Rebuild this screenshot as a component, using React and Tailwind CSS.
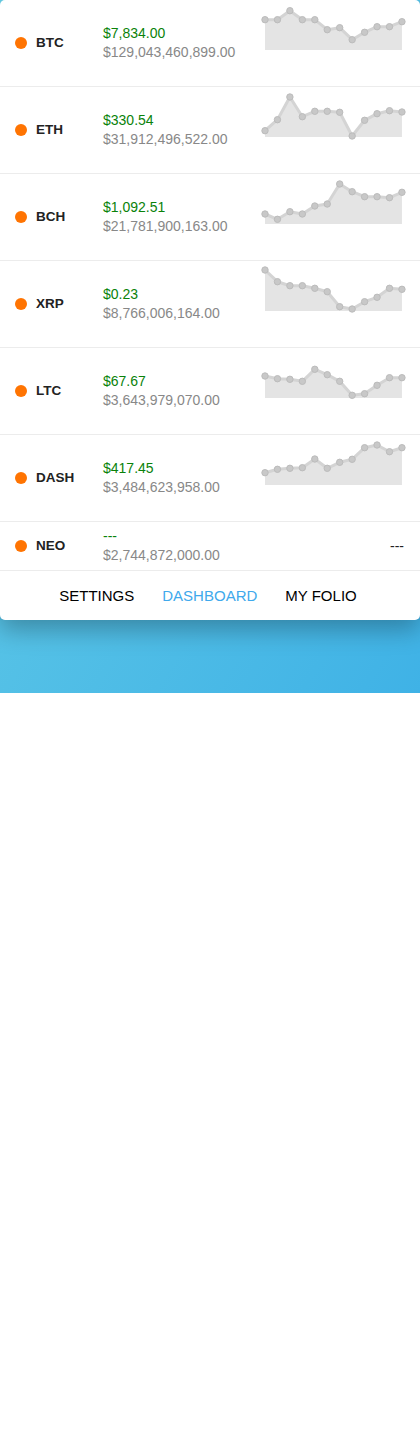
import React from "react";

const coins = [
  { sym: "BTC", price: "$7,834.00", cap: "$129,043,460,899.00", ys: [19.7, 19.7, 10.7, 19.7, 19.7, 29.7, 27.7, 39.7, 32.3, 26.7, 26.7, 21.7] },
  { sym: "ETH", price: "$330.54", cap: "$31,912,496,522.00", ys: [43.7, 32.7, 10, 29.7, 24.3, 24.3, 25.3, 49, 33.3, 26.7, 23.7, 25] },
  { sym: "BCH", price: "$1,092.51", cap: "$21,781,900,163.00", ys: [40, 45.3, 37.7, 40, 32, 30, 10, 17.7, 22.7, 22.7, 23.7, 18.3] },
  { sym: "XRP", price: "$0.23", cap: "$8,766,006,164.00", ys: [9, 20.7, 24.7, 24.7, 27.3, 30.7, 45.7, 48, 40.7, 36.3, 27.3, 28.3] },
  { sym: "LTC", price: "$67.67", cap: "$3,643,979,070.00", ys: [28, 30.7, 31.3, 33.3, 21.3, 26.7, 33.3, 47.3, 45.7, 37.3, 29.7, 29.7] },
  { sym: "DASH", price: "$417.45", cap: "$3,484,623,958.00", ys: [37.7, 34.3, 33.3, 32.7, 24, 33.3, 27.3, 24.3, 12.7, 10, 16.7, 12.7] },
];

function Sparkline({ ys }) {
  const pts = ys.map((y, i) => [7 + i * 12.45, y]);
  const line = pts.map((p) => p.join(",")).join(" ");
  const area = `7,50 ${line} ${pts[pts.length - 1][0]},50`;
  return (
    <svg width="150" height="86" viewBox="0 0 150 86" className="ml-auto mr-[12px] shrink-0">
      <polygon points={area} fill="#e4e4e4" />
      <polyline points={line} fill="none" stroke="#d4d4d4" strokeWidth="3" strokeLinejoin="round" />
      {pts.map(([x, y], i) => (
        <circle key={i} cx={x} cy={y} r="3.2" fill="#c8c8c8" stroke="#bcbcbc" strokeWidth="1" />
      ))}
    </svg>
  );
}

function Row({ coin, neo }) {
  return (
    <div className={`flex items-center border-b border-[#ececec] ${neo ? "h-[48px]" : "h-[86px]"} box-content`}>
      <div className="ml-[15px] w-3 h-3 rounded-full bg-[#ff7402] shrink-0" />
      <div className="ml-[9px] w-[67px] text-[13.5px] font-bold text-[#222]">{coin.sym}</div>
      <div className="flex flex-col text-[14px] leading-[19px]">
        <span className="text-[#0a820a]">{coin.price}</span>
        <span className="text-[#888]">{coin.cap}</span>
      </div>
      {neo ? (
        <span className="ml-auto mr-[16px] text-[14px] text-[#222]">---</span>
      ) : (
        <Sparkline ys={coin.ys} />
      )}
    </div>
  );
}

export default function App() {
  return (
    <div className="font-['Liberation_Sans',Arial,sans-serif]">
      <div className="h-[693px] bg-gradient-to-br from-[#66cee6] to-[#3fb2e6]">
        <div className="h-[620px] bg-white rounded-[5px] shadow-[0_10px_24px_rgba(0,0,0,0.28)] flex flex-col">
          <div className="flex-1 overflow-hidden">
            {coins.map((c) => (
              <Row key={c.sym} coin={c} />
            ))}
            <Row coin={{ sym: "NEO", price: "---", cap: "$2,744,872,000.00" }} neo />
          </div>
          <nav className="h-[49px] flex items-center justify-center gap-[28px] pr-[4px] pt-[1px] text-[15px] text-black">
            <span>SETTINGS</span>
            <span className="text-[#40a9ec]">DASHBOARD</span>
            <span>MY FOLIO</span>
          </nav>
        </div>
      </div>
    </div>
  );
}
